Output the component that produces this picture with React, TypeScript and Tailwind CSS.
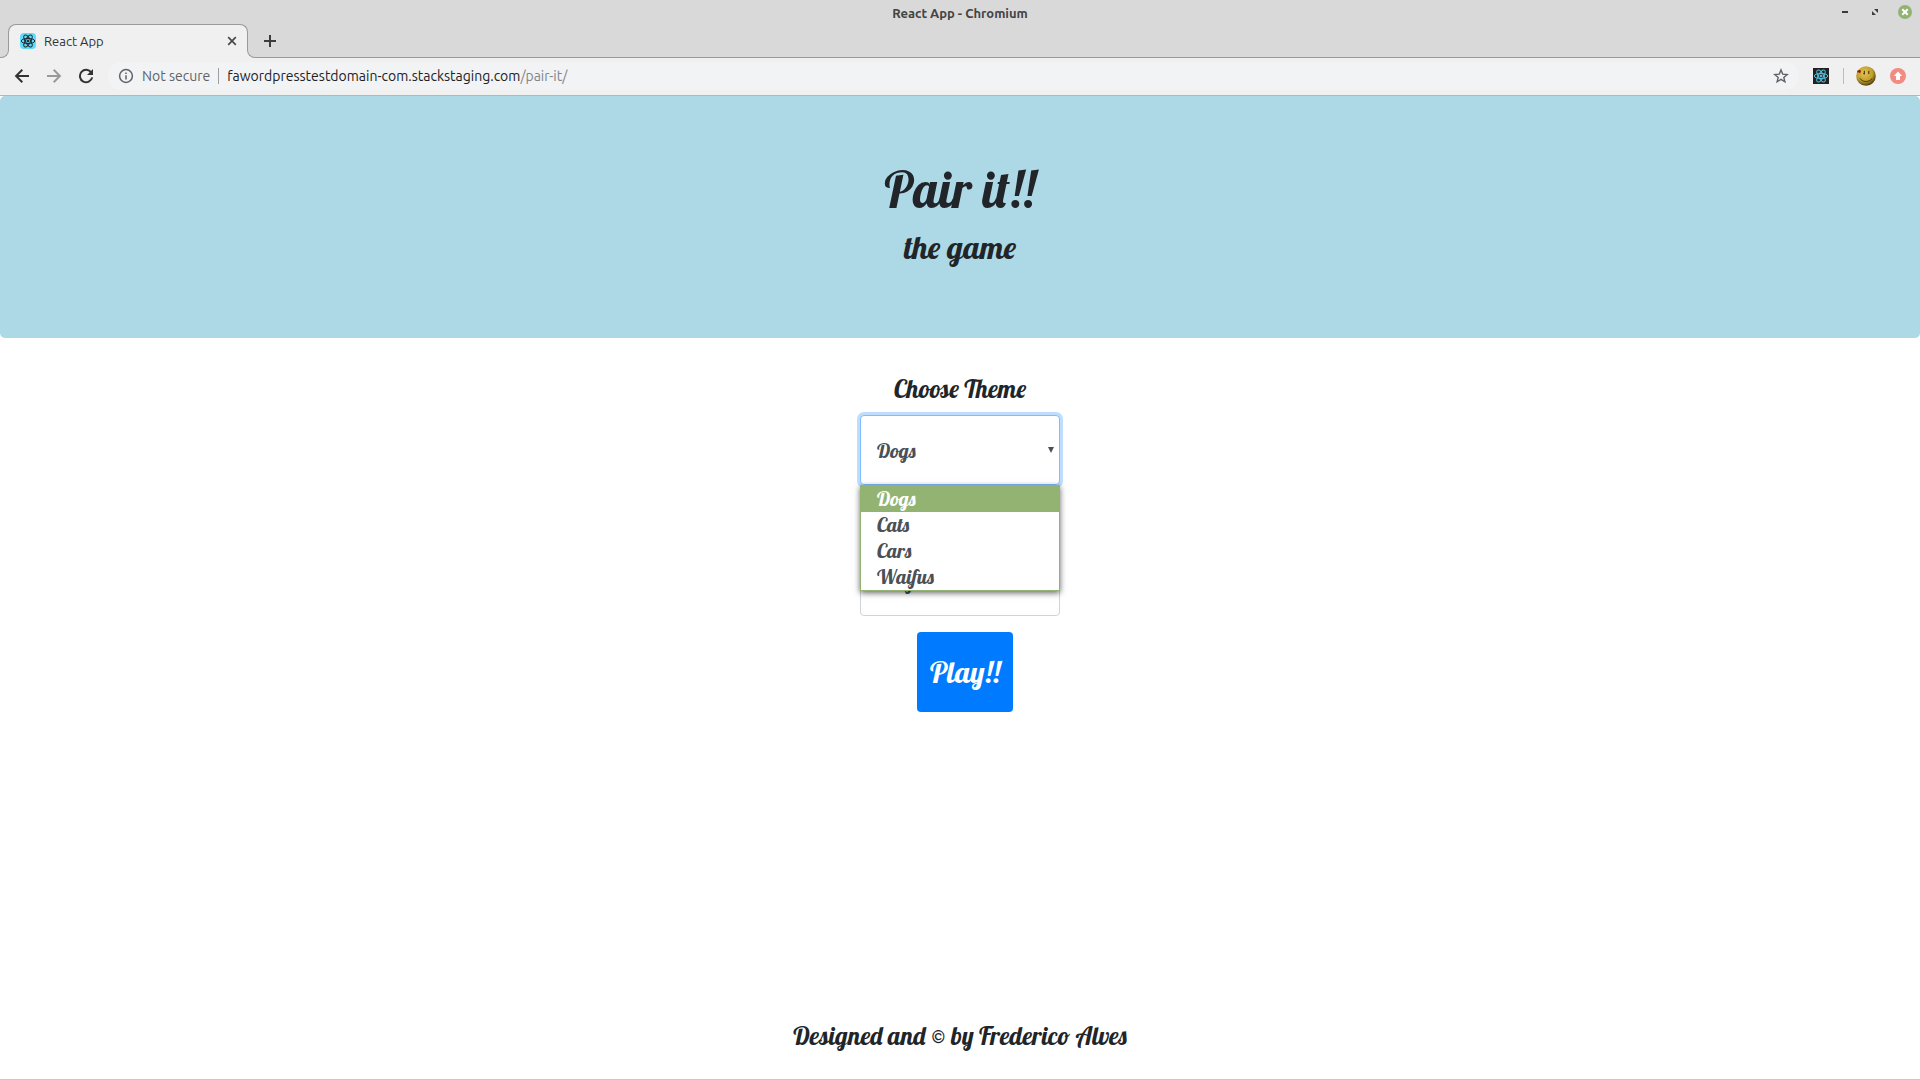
import React, { useState } from "react";

const UI = "font-['Ubuntu','Noto_Sans',sans-serif]";
const SCRIPT = "font-['Lobster','Liberation_Serif',serif]";

function Atom({ className, stroke }: { className: string; stroke: string }) {
  return (
    <svg viewBox="0 0 32 32" className={className} fill="none" stroke={stroke} strokeWidth="2" aria-hidden="true">
      <ellipse cx="16" cy="16" rx="13.5" ry="5.2" />
      <ellipse cx="16" cy="16" rx="13.5" ry="5.2" transform="rotate(60 16 16)" />
      <ellipse cx="16" cy="16" rx="13.5" ry="5.2" transform="rotate(120 16 16)" />
      <circle cx="16" cy="16" r="2" fill={stroke} />
    </svg>
  );
}

function TitleBar() {
  return (
    <header className="relative flex h-6 items-center justify-center bg-[#d9d9d9] pt-0.5">
      <span className="text-[13px] leading-4 font-bold text-[#444444]">React App - Chromium</span>
      <div className="absolute top-0 right-2 flex h-6 items-center gap-4">
        <button aria-label="Minimize" className="flex size-3.5 items-center justify-center">
          <span className="h-0.5 w-1.5 bg-[#3c3c3c]" />
        </button>
        <button aria-label="Restore" className="flex size-3.5 items-center justify-center">
          <svg viewBox="0 0 6 6" className="size-1.5" fill="#3c3c3c">
            <path d="M2 0H6V4ZM0 2V6H4Z" />
          </svg>
        </button>
        <button aria-label="Close window" className="flex size-3.5 items-center justify-center rounded-full bg-[#92b372]">
          <svg viewBox="0 0 14 14" className="size-3.5" stroke="#ffffff" strokeWidth="2">
            <path d="M4.3 4.3 9.7 9.7M9.7 4.3 4.3 9.7" />
          </svg>
        </button>
      </div>
    </header>
  );
}

function TabStrip() {
  return (
    <div className="flex h-[34px] items-end bg-[#d9d9d9] shadow-[inset_0_-1px_#999999]">
      <div className="relative z-10 -mr-px size-[9px] bg-[#f0f0f0]">
        <div className="size-full rounded-br-lg border-r border-b border-[#999999] bg-[#d9d9d9]" />
      </div>
      <div className="flex h-full w-[240px] items-center rounded-t-lg border-x border-t border-[#999999] bg-[#f0f0f0] pr-[7px] pb-px pl-[11px]">
        <span className="flex size-4 items-center justify-center rounded-sm bg-[#61dafb]">
          <Atom className="size-4" stroke="#20282c" />
        </span>
        <span className="ml-2 flex-1 text-[13px] leading-4 text-[#333333]">React App</span>
        <button aria-label="Close tab" className="flex size-4 items-center justify-center">
          <svg viewBox="0 0 16 16" className="size-4" stroke="#4a4a4a" strokeWidth="1.7">
            <path d="M4.2 4.2 11.8 11.8M11.8 4.2 4.2 11.8" />
          </svg>
        </button>
      </div>
      <div className="relative z-10 -ml-px size-[9px] bg-[#f0f0f0]">
        <div className="size-full rounded-bl-lg border-b border-l border-[#999999] bg-[#d9d9d9]" />
      </div>
      <button aria-label="New tab" className="flex h-full w-7 items-center justify-center">
        <svg viewBox="0 0 16 16" className="size-4" stroke="#3c3c3c" strokeWidth="2">
          <path d="M8 2V14M2 8H14" />
        </svg>
      </button>
    </div>
  );
}

function Toolbar() {
  return (
    <div className="flex h-[38px] items-center border-b border-[#b6b6b6] bg-[#f0f0f0] px-3.5 pb-px">
      <nav className="flex items-center gap-4" aria-label="Navigation">
        <button aria-label="Back">
          <svg viewBox="0 0 16 16" className="size-4" fill="none" stroke="#333333" strokeWidth="2">
            <path d="M15 8H2.5M8.3 1.8 2.1 8 8.3 14.2" />
          </svg>
        </button>
        <button aria-label="Forward">
          <svg viewBox="0 0 16 16" className="size-4" fill="none" stroke="#999999" strokeWidth="2">
            <path d="M1 8H13.5M7.7 1.8 13.9 8 7.7 14.2" />
          </svg>
        </button>
        <button aria-label="Reload">
          <svg viewBox="0 0 16 16" className="size-4" fill="none" stroke="#333333" strokeWidth="2">
            <path d="M13.3 4.6A6.2 6.2 0 1 0 14.2 9.4" />
            <path d="M15 1V7H9Z" fill="#333333" stroke="none" />
          </svg>
        </button>
      </nav>
      <div className="ml-3.5 flex h-7 flex-1 items-center rounded-full bg-[#f1f3f4] pr-2.5 pl-2.5 text-sm leading-5">
        <svg viewBox="0 0 16 16" className="size-4" fill="none" stroke="#5f6368" strokeWidth="1.5" aria-hidden="true">
          <circle cx="8" cy="8" r="6.4" />
          <path d="M8 7.2V11.6M8 4.4V6" />
        </svg>
        <span className="ml-2 text-[#5f6368]">Not secure</span>
        <span className="mx-2 h-4 w-px bg-[#9aa0a6]" />
        <a href="#" className="text-[#202124]">
          fawordpresstestdomain-com.stackstaging.com<span className="text-[#80868b]">/pair-it/</span>
        </a>
        <button aria-label="Bookmark this page" className="ml-auto">
          <svg viewBox="0 0 16 16" className="size-4" fill="none" stroke="#5f6368" strokeWidth="1.4">
            <path d="M8 1.9 9.7 6.1 14.2 6.5 10.8 9.4 11.9 13.8 8 11.4 4.1 13.8 5.2 9.4 1.8 6.5 6.3 6.1Z" />
          </svg>
        </button>
      </div>
      <button aria-label="React Developer Tools" className="ml-3.5 flex size-4 items-center justify-center bg-[#222222]">
        <Atom className="size-4" stroke="#53c1de" />
      </button>
      <span className="ml-3.5 h-4 w-px bg-[#bdbdbd]" />
      <button aria-label="Profile" className="ml-3">
        <svg viewBox="0 0 20 20" className="size-5">
          <defs>
            <radialGradient id="face" cx="0.42" cy="0.35" r="0.65">
              <stop offset="0" stopColor="#e2c652" />
              <stop offset="0.65" stopColor="#bf9c2e" />
              <stop offset="1" stopColor="#4f3e0c" />
            </radialGradient>
          </defs>
          <circle cx="10" cy="10" r="9.8" fill="url(#face)" />
          <path d="M4 12.3C6 16.4 13 16.6 16.2 12.5" fill="none" stroke="#4a3806" strokeWidth="1" />
          <path d="M8.3 4.8V8.4M12.8 4.8V8" stroke="#33260a" strokeWidth="1" />
          <path d="M1.4 4.4 4.6 4 4.8 5.4 4.2 7.2 2.6 6.2 1.2 6.6Z" fill="#8d1710" />
          <path d="M7 7.6H9" stroke="#8d1710" strokeWidth="0.8" />
        </svg>
      </button>
      <button aria-label="Update available" className="ml-3.5">
        <svg viewBox="0 0 16 16" className="size-4">
          <circle cx="8" cy="8" r="8" fill="#f28b82" />
          <path d="M8 3.6 12.2 8H10V12H6V8H3.8Z" fill="#ffffff" />
        </svg>
      </button>
    </div>
  );
}

const themes = ["Dogs", "Cats", "Cars", "Waifus"];
const SELECT =
  "block h-[70px] w-full appearance-none rounded border bg-white pt-0.5 pl-4 text-[20px] text-[#495057] outline-none";

export default function App() {
  const [theme, setTheme] = useState("Dogs");
  return (
    <div className={`flex min-h-screen flex-col bg-white ${UI}`}>
      <TitleBar />
      <TabStrip />
      <Toolbar />
      <div className={`flex flex-1 flex-col items-center border-b border-[#c8c8c8] text-[#212529] ${SCRIPT}`}>
        <section className="w-full rounded-[5px] bg-[#add8e6] pt-16 pb-[70px] text-center">
          <h1 className="text-[50px] leading-[60px]">Pair it!!</h1>
          <h2 className="mt-1.5 text-[32px] leading-[42px]">the game</h2>
        </section>
        <form className="flex w-[200px] flex-col pt-8" onSubmit={(e) => e.preventDefault()}>
          <label htmlFor="theme" className="self-center text-[25px] leading-[38px] whitespace-nowrap">
            Choose Theme
          </label>
          <div className="relative mt-[7px]">
            <select
              id="theme"
              value={theme}
              onChange={(e) => setTheme(e.target.value)}
              className={`${SELECT} border-[#80bdff] shadow-[0_0_0_3px_rgba(0,123,255,0.25)]`}
            >
              {themes.map((t) => (
                <option key={t}>{t}</option>
              ))}
            </select>
            <svg viewBox="0 0 6 6" className="pointer-events-none absolute top-8 right-1.5 size-1.5" fill="#495057">
              <path d="M0 0H6L3 6Z" />
            </svg>
            <ul
              role="listbox"
              aria-label="Theme options"
              className="absolute top-full left-0 z-10 w-full border border-[#92b372] bg-white text-[20px] leading-[26px] text-[#495057] shadow-[0_2px_6px_rgba(0,0,0,0.6)]"
            >
              {themes.map((t) => (
                <li
                  key={t}
                  role="option"
                  aria-selected={t === theme}
                  onClick={() => setTheme(t)}
                  className="pl-4 aria-selected:bg-[#92b372] aria-selected:text-white"
                >
                  {t}
                </li>
              ))}
            </ul>
          </div>
          <select aria-label="Level" className={`${SELECT} mt-[61px] border-[#ced4da]`}>
            <option>Easy</option>
          </select>
          <button
            type="submit"
            className="mt-4 ml-2.5 h-20 self-center rounded bg-[#007bff] px-[13px] text-[30px] leading-10 text-white"
          >
            Play!!
          </button>
        </form>
        <footer className="mt-auto pb-6 text-[25px] leading-[38px]">Designed and © by Frederico Alves</footer>
      </div>
    </div>
  );
}
